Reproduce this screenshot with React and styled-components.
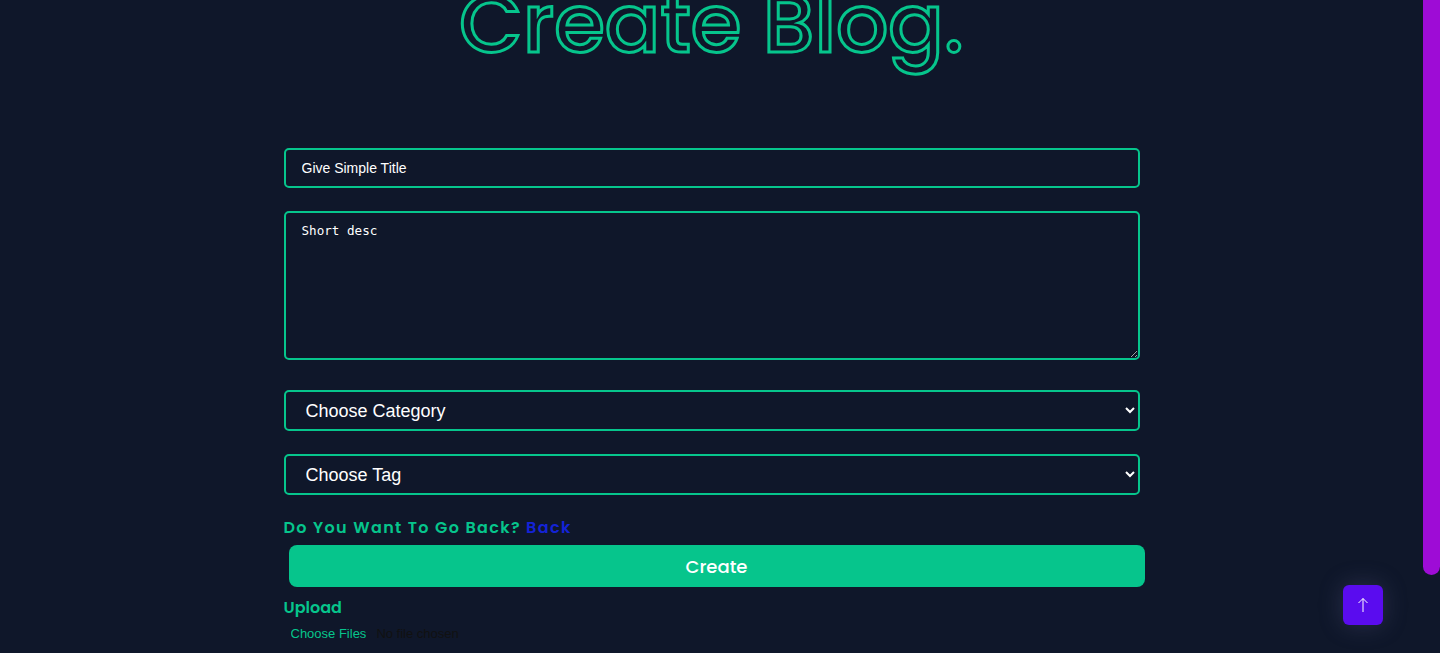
import styled, { createGlobalStyle } from "styled-components";

const GlobalStyle = createGlobalStyle`
  html, body {
    margin: 0;
    padding: 0;
    background: #0f172a;
    overflow: hidden;
  }
  body {
    font-family: "Poppins", "Inter", "Liberation Sans", sans-serif;
  }
`;

const Shell = styled.div`
  display: flex;
  width: 100%;
  height: 653px;
`;

const Page = styled.div`
  flex: 1;
  display: flex;
  flex-direction: column;
  align-items: center;
`;

// the page scrollbar as drawn in the reference (headless hides the native one)
const ScrollTrack = styled.div`
  width: 17px;
  flex-shrink: 0;
  background: #0f172a;
`;

const ScrollThumb = styled.div`
  height: 575px;
  background: #9e0cd6;
  border-radius: 0 0 9px 9px;
`;

const Heading = styled.h1`
  margin: -25px 0 0;
  font-family: "Poppins", "Inter", sans-serif;
  font-weight: 500;
  font-size: 82px;
  line-height: 1.2;
  color: transparent;
  -webkit-text-stroke: 3px #06c58c;
`;

const Form = styled.form`
  width: 856px;
  margin-top: 75px;
  display: flex;
  flex-direction: column;
`;

const fieldBase = `
  box-sizing: border-box;
  width: 100%;
  background: #0f172a;
  border: 2px solid #06c58c;
  border-radius: 5px;
  color: #fff;
  outline: none;
`;

const TextInput = styled.input`
  ${fieldBase}
  height: 40px;
  padding: 0 16px;
  font-family: "Liberation Sans", Arial, sans-serif;
  font-size: 14px;
  &::placeholder {
    color: #fff;
  }
`;

const TextArea = styled.textarea`
  ${fieldBase}
  height: 149px;
  margin-top: 23px;
  padding: 10px 16px;
  font-family: "DejaVu Sans Mono", monospace;
  font-size: 12.6px;
  &::placeholder {
    color: #fff;
  }
`;

const Select = styled.select`
  ${fieldBase}
  height: 41px;
  margin-top: ${(p) => p.$gap}px;
  padding: 0 16px;
  font-family: "Liberation Sans", Arial, sans-serif;
  font-size: 18px;
`;

const BackLine = styled.p`
  margin: 20px 0 0;
  font-family: "Poppins", "Inter", sans-serif;
  font-weight: 600;
  font-size: 16px;
  letter-spacing: 1.35px;
  color: #06c58c;
`;

const BackLink = styled.a`
  color: #1423d6;
  text-decoration: none;
`;

const CreateButton = styled.button`
  margin: 5px 0 0 5px;
  width: 856px;
  height: 42px;
  border: none;
  border-radius: 8px;
  background: #06c58c;
  color: #fff;
  font-family: "Poppins", "Inter", sans-serif;
  font-weight: 500;
  font-size: 18px;
`;

const UploadLabel = styled.label`
  margin-top: 8px;
  font-family: "Poppins", "Inter", sans-serif;
  font-weight: 600;
  font-size: 16px;
  color: #06c58c;
`;

const FileInput = styled.input`
  margin: 6px 0 0 7px;
  font-family: "Liberation Sans", Arial, sans-serif;
  font-size: 13px;
  color: #111;
  &::file-selector-button {
    background: transparent;
    border: none;
    color: #06c58c;
    font-family: "Liberation Sans", Arial, sans-serif;
    font-size: 13px;
    padding: 0;
    margin-right: 10px;
  }
`;

const ScrollTop = styled.button`
  position: fixed;
  right: 57px;
  bottom: 28px;
  width: 40px;
  height: 40px;
  border: none;
  border-radius: 6px;
  background: #5a0cef;
  box-shadow: 0 0 24px rgba(120, 120, 180, 0.25);
  display: flex;
  align-items: center;
  justify-content: center;
`;

const App = () => {
  return (
    <Shell>
      <GlobalStyle />
      <Page>
        <Heading>Create Blog.</Heading>
        <Form onSubmit={(e) => e.preventDefault()}>
          <TextInput placeholder="Give Simple Title" />
          <TextArea placeholder="Short desc" />
          <Select $gap={30} defaultValue="">
            <option value="">Choose Category</option>
          </Select>
          <Select $gap={23} defaultValue="">
            <option value="">Choose Tag</option>
          </Select>
          <BackLine>
            Do You Want To Go Back? <BackLink href="#">Back</BackLink>
          </BackLine>
          <CreateButton type="submit">Create</CreateButton>
          <UploadLabel>Upload</UploadLabel>
          <FileInput type="file" multiple />
        </Form>
      </Page>
      <ScrollTrack>
        <ScrollThumb />
      </ScrollTrack>
      <ScrollTop aria-label="Scroll to top">
        <svg width="14" height="16" viewBox="0 0 14 16" fill="none" stroke="#fff" strokeWidth="1">
          <path d="M7 15V1.5M2.5 6L7 1.5L11.5 6" />
        </svg>
      </ScrollTop>
    </Shell>
  );
};

export default App;
